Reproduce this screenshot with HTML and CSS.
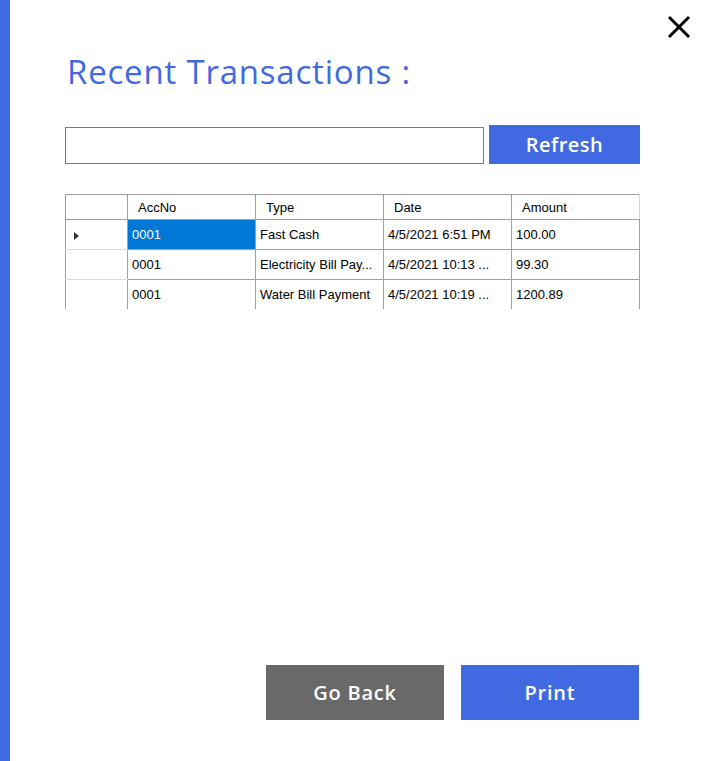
FILE: index.html
```html
<!DOCTYPE html>
<html>
<head>
<meta charset="utf-8">
<link rel="stylesheet" href="styles.css">
</head>
<body>
<div class="window">
  <div class="sidebar"></div>
  <div class="main">
    <div class="close" aria-label="Close">
      <svg width="24" height="24" viewBox="0 0 24 24"><path d="M2 2 L22 22 M22 2 L2 22" stroke="#000" stroke-width="3" fill="none"/></svg>
    </div>
    <h1 class="title">Recent Transactions :</h1>
    <div class="search-row">
      <input class="search" type="text">
      <button class="btn btn-blue refresh">Refresh</button>
    </div>
    <table class="grid">
      <colgroup>
        <col class="c-rh"><col class="c-data"><col class="c-data"><col class="c-data"><col class="c-data">
      </colgroup>
      <thead>
        <tr><th class="rh"></th><th>AccNo</th><th>Type</th><th>Date</th><th>Amount</th></tr>
      </thead>
      <tbody>
        <tr><td class="rh"><span class="arrow"></span></td><td class="sel">0001</td><td>Fast Cash</td><td>4/5/2021 6:51 PM</td><td>100.00</td></tr>
        <tr><td class="rh"></td><td>0001</td><td>Electricity Bill Pay...</td><td>4/5/2021 10:13 ...</td><td>99.30</td></tr>
        <tr class="last"><td class="rh"></td><td>0001</td><td>Water Bill Payment</td><td>4/5/2021 10:19 ...</td><td>1200.89</td></tr>
      </tbody>
    </table>
    <div class="spacer"></div>
    <div class="actions">
      <button class="btn btn-gray big">Go Back</button>
      <button class="btn btn-blue big">Print</button>
    </div>
  </div>
</div>
</body>
</html>
```
FILE: styles.css
```css
html, body { margin: 0; padding: 0; background: #fff; }
.window { display: flex; width: 702px; height: 761px; overflow: hidden; }
.sidebar { width: 10px; background: #4169e1; flex: none; }
.main { position: relative; flex: 1; display: flex; flex-direction: column; padding: 0 63px 41px 55px; }
.close { position: absolute; left: 657px; top: 15px; width: 24px; height: 24px; }
.close svg { display: block; }
.title { margin: 50px 0 0 2px; font-family: "Open Sans", sans-serif; font-weight: 400; font-size: 33px; line-height: 44px; color: #4169e1; letter-spacing: 0.8px; }
.search-row { display: flex; margin-top: 31px; align-items: flex-start; gap: 5px; }
.search { width: 419px; height: 37px; box-sizing: border-box; border: 1px solid #7a7a7a; margin: 2px 0 0 0; padding: 0; }
.btn { border: none; color: #fff; font-family: "Open Sans", sans-serif; font-weight: 600; cursor: pointer; padding: 0; }
.btn-blue { background: #4169e1; }
.btn-gray { background: #696969; }
.refresh { width: 151px; height: 39px; font-size: 20px; letter-spacing: 0.5px; }
.grid { margin-top: 30px; border-collapse: collapse; width: 575px; table-layout: fixed; font-family: "Liberation Sans", Arial, sans-serif; font-size: 13px; color: #000; }
.c-rh { width: 62px; }
.c-data { width: 128px; }
.grid th, .grid td { border: 1px solid #a0a0a0; text-align: left; font-weight: 400; padding: 0 0 0 4px; white-space: nowrap; overflow: hidden; }
.grid th { height: 24px; padding-left: 10px; border-top-color: #a0a0a0; }
.grid th + th { border-left-color: #d8d8d8; }
.grid thead th:last-child { border-right-color: #d8d8d8; }
.grid td { height: 29px; }
.grid td.rh { border-top-color: #dcdcdc; border-bottom-color: #dcdcdc; }
.grid tr.last td { border-bottom: none; }
.grid .sel { background: #0078d7; color: #fff; }
.arrow { display: inline-block; width: 0; height: 0; border-top: 4px solid transparent; border-bottom: 4px solid transparent; border-left: 5px solid #333; margin-left: 4px; vertical-align: -1px; }
.spacer { flex: 1; }
.actions { display: flex; justify-content: flex-end; gap: 17px; margin-right: 1px; }
.big { width: 178px; height: 55px; font-size: 20px; letter-spacing: 0.8px; }
```
